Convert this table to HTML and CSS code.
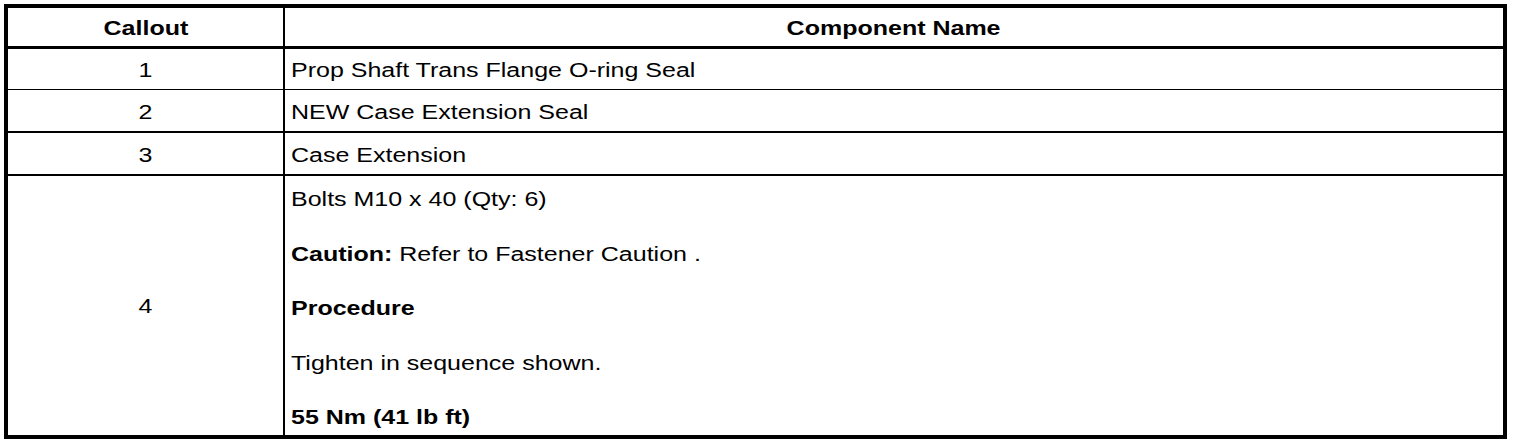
FILE: index.html
```html
<!DOCTYPE html>
<html>
<head>
<meta charset="utf-8">
<link rel="stylesheet" href="styles.css">
</head>
<body>
<table class="parts">
  <thead>
    <tr class="row-head">
      <th class="col-callout"><span class="txt">Callout</span></th>
      <th class="col-name"><span class="txt">Component Name</span></th>
    </tr>
  </thead>
  <tbody>
    <tr class="row-a">
      <td class="col-callout"><span class="txt">1</span></td>
      <td class="col-name"><span class="txt">Prop Shaft Trans Flange O-ring Seal</span></td>
    </tr>
    <tr class="row-b">
      <td class="col-callout"><span class="txt">2</span></td>
      <td class="col-name"><span class="txt">NEW Case Extension Seal</span></td>
    </tr>
    <tr class="row-b">
      <td class="col-callout"><span class="txt">3</span></td>
      <td class="col-name"><span class="txt">Case Extension</span></td>
    </tr>
    <tr class="row-last">
      <td class="col-callout"><span class="txt">4</span></td>
      <td class="col-name">
        <div class="stack">
          <p><span class="txt">Bolts M10 x 40 (Qty: 6)</span></p>
          <p><span class="txt"><b>Caution:</b> Refer to Fastener Caution .</span></p>
          <p><span class="txt"><b>Procedure</b></span></p>
          <p><span class="txt">Tighten in sequence shown.</span></p>
          <p><span class="txt"><b>55 Nm (41 lb ft)</b></span></p>
        </div>
      </td>
    </tr>
  </tbody>
</table>
</body>
</html>
```

FILE: styles.css
```css
html, body {
  margin: 0;
  padding: 0;
  background: #fff;
}
body {
  padding: 4px;
  font-family: "Liberation Sans", Arial, sans-serif;
  font-size: 20px;
  color: #000;
}
.parts {
  width: 1503px;
  border: 4px solid #000;
  border-collapse: separate;
  border-spacing: 0;
  table-layout: fixed;
}
.parts th,
.parts td {
  padding: 0;
  vertical-align: middle;
  line-height: 24px;
}
.parts th {
  font-weight: bold;
  text-align: center;
}
.txt {
  display: inline-block;
  white-space: nowrap;
  transform: scaleX(1.25);
  transform-origin: left center;
}
.parts th .txt,
.col-callout .txt {
  transform-origin: center center;
}
.col-callout {
  width: 275px;
  text-align: center;
  border-right: 2px solid #000;
}
.col-name {
  text-align: left;
  padding-left: 6px !important;
}
th.col-name {
  text-align: center;
  padding-left: 0 !important;
}
.row-head th {
  height: 37px;
  padding-top: 1px !important;
  border-bottom: 3px solid #000;
}
.row-a td {
  height: 38px;
  padding-top: 2px !important;
  border-bottom: 1px solid #000;
}
.row-b td {
  height: 38px;
  padding-top: 3px !important;
  border-bottom: 2px solid #000;
}
.row-last td {
  height: 259px;
}
.stack {
  display: flex;
  flex-direction: column;
  gap: 30.6px;
  padding: 11px 0 6px;
}
.stack p {
  margin: 0;
  line-height: 24px;
}
```
